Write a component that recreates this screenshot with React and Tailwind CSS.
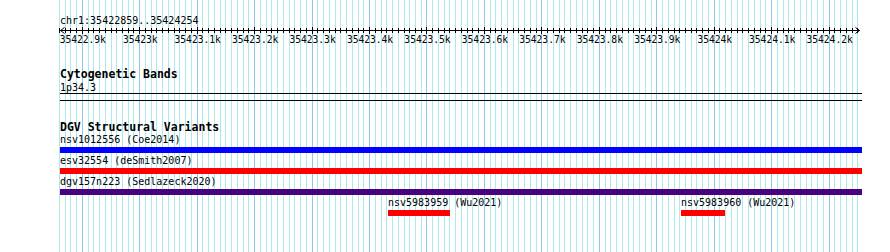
import React from "react";

const X = (i) => 59.3 + i * 5.745;
const px = (i) => Math.floor(X(i)) + 0.5;
const IDX = Array.from({ length: 140 }, (_, i) => i);
const LABELS = [
  "35422.9k", "35423k", "35423.1k", "35423.2k", "35423.3k", "35423.4k", "35423.5k",
  "35423.6k", "35423.7k", "35423.8k", "35423.9k", "35424k", "35424.1k", "35424.2k",
];

function Grid() {
  return (
    <svg className="absolute inset-0" width="890" height="252">
      {IDX.map((i) => (
        <line
          key={i}
          x1={px(i)}
          x2={px(i)}
          y1="0"
          y2="252"
          stroke={(i - 4) % 10 === 0 ? "#8ec8ee" : "#ace9ec"}
          strokeWidth="1"
        />
      ))}
    </svg>
  );
}

function Ruler() {
  return (
    <div className="flex flex-col">
      <div className="h-[15px]" />
      <div className="pl-[60px] h-[12px] leading-[12px] text-[10px]">chr1:35422859..35424254</div>
      <svg width="890" height="7" className="block">
        <line x1="60" x2="860" y1="3.5" y2="3.5" stroke="#000" strokeWidth="1" />
        <polyline points="64.5,0.5 60.5,3.5 64.5,6.5" fill="none" stroke="#000" strokeWidth="1" />
        <polyline points="855.5,0.5 859.5,3.5 855.5,6.5" fill="none" stroke="#000" strokeWidth="1" />
        {IDX.map((i) => {
          const major = (i - 4) % 10 === 0;
          return (
            <line
              key={i}
              x1={px(i)}
              x2={px(i)}
              y1={major ? 0 : 1}
              y2={major ? 7 : 6}
              stroke="#000"
              strokeWidth="1"
            />
          );
        })}
      </svg>
      <div className="relative h-[13px] text-[9.6px] leading-[12px]">
        {LABELS.map((l, k) => (
          <span
            key={l}
            className="absolute top-0 -translate-x-1/2 whitespace-nowrap"
            style={{ left: X(4 + k * 10) + 0.5 }}
          >
            {l}
          </span>
        ))}
      </div>
    </div>
  );
}

function Feature({ label, color }) {
  return (
    <div className="flex flex-col">
      <div className="h-[13px] leading-[12px] text-[10px] whitespace-nowrap">{label}</div>
      <div className={`h-[6px] w-[802px] ${color}`} />
      <div className="h-[2px]" />
    </div>
  );
}

export default function App() {
  return (
    <div className="relative w-[890px] h-[252px] bg-white overflow-hidden text-black font-['DejaVu_Sans_Mono',monospace]">
      <Grid />
      <div className="relative flex flex-col">
        <Ruler />
        <div className="h-[20px]" />
        <div className="pl-[60px] flex flex-col">
          <div className="h-[14px] leading-[14px] text-[11.5px] font-bold">Cytogenetic Bands</div>
          <div className="h-[1px]" />
          <div className="h-[11px] leading-[12px] text-[10px]">1p34.3</div>
          <div className="h-[8px] w-[802px] border-y border-black" />
          <div className="h-[20px]" />
          <div className="h-[13px] leading-[13px] text-[11.5px] font-bold whitespace-nowrap">DGV Structural Variants</div>
          <Feature label="nsv1012556 (Coe2014)" color="bg-[#0000ff]" />
          <Feature label="esv32554 (deSmith2007)" color="bg-[#ff0000]" />
          <Feature label="dgv157n223 (Sedlazeck2020)" color="bg-[#4b0082]" />
          <div className="relative h-[21px]">
            <div className="absolute top-0 left-[328px] flex flex-col">
              <div className="h-[13px] leading-[12px] text-[10px] whitespace-nowrap">nsv5983959 (Wu2021)</div>
              <div className="h-[6px] w-[62px] bg-[#ff0000]" />
            </div>
            <div className="absolute top-0 left-[621px] flex flex-col">
              <div className="h-[13px] leading-[12px] text-[10px] whitespace-nowrap">nsv5983960 (Wu2021)</div>
              <div className="h-[6px] w-[44px] bg-[#ff0000]" />
            </div>
          </div>
        </div>
      </div>
    </div>
  );
}
